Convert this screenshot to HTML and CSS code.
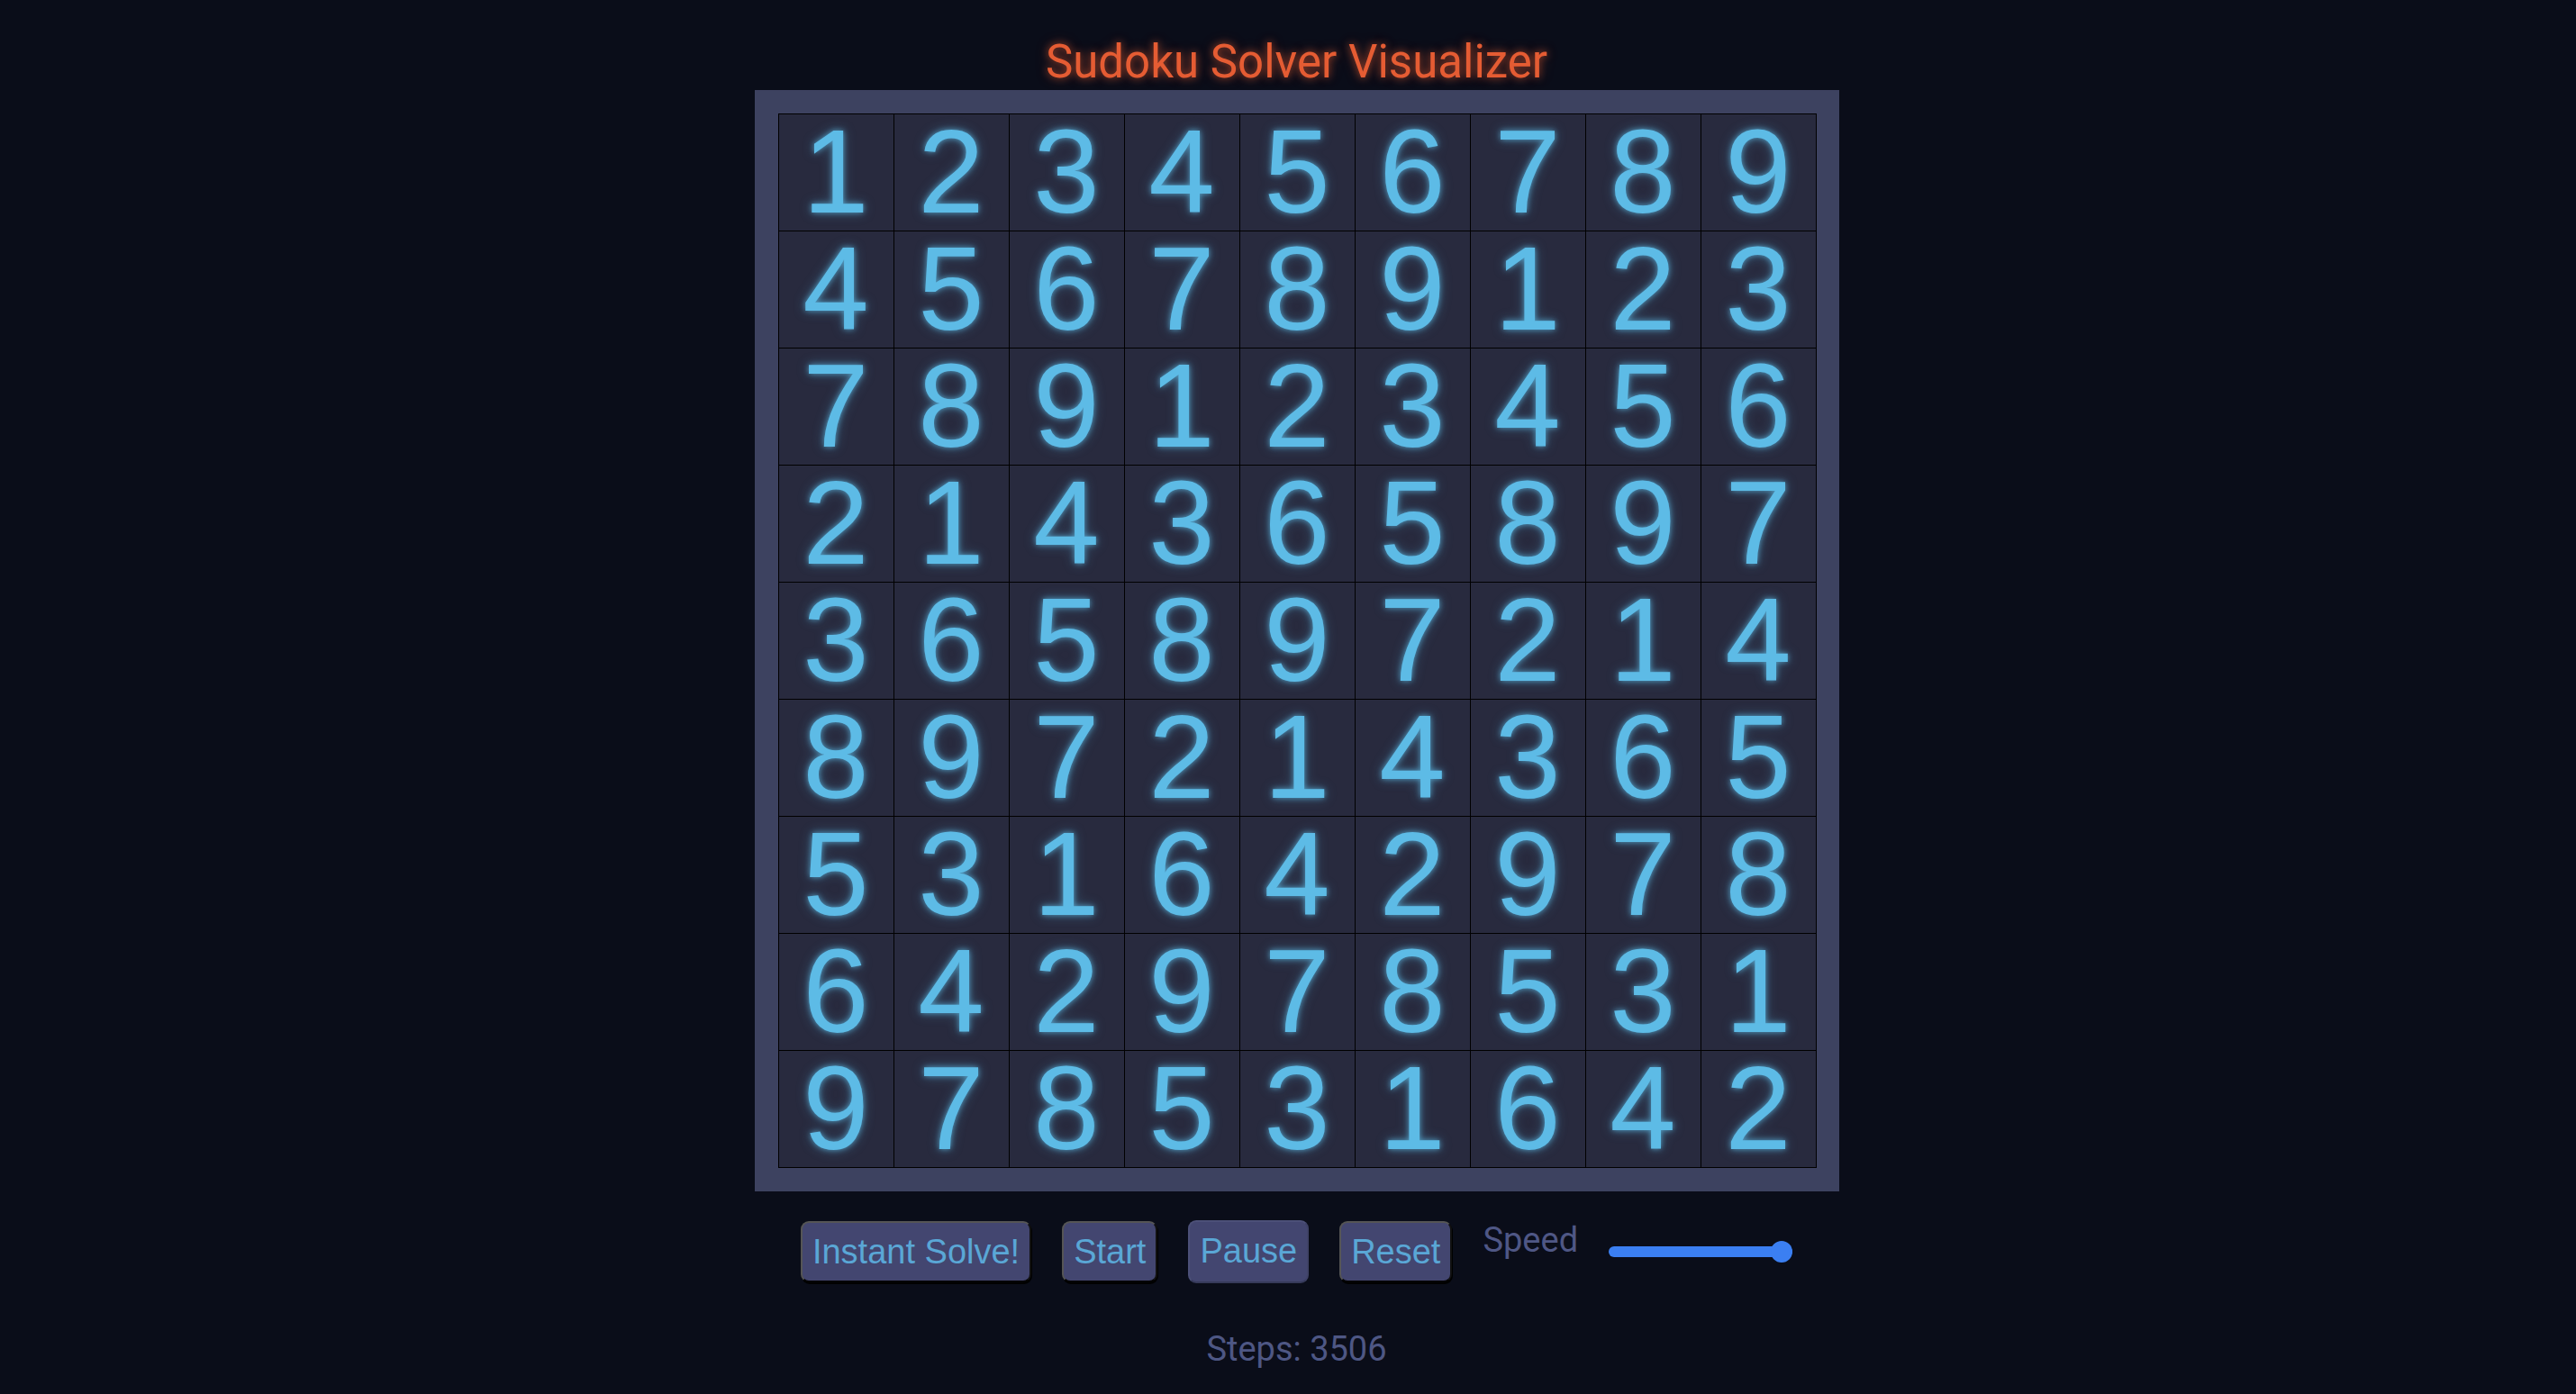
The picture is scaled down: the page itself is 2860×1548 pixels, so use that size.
FILE: index.html
```html
<!DOCTYPE html>
<html>
<head>
<meta charset="utf-8">
<title>Sudoku Solver Visualizer</title>
<link rel="stylesheet" href="styles.css">
</head>
<body>
<main class="app">
  <h1 class="title">Sudoku Solver Visualizer</h1>
  <section class="board">
    <div class="grid">
      <div class="cell">1</div><div class="cell">2</div><div class="cell">3</div><div class="cell">4</div><div class="cell">5</div><div class="cell">6</div><div class="cell">7</div><div class="cell">8</div><div class="cell">9</div>
      <div class="cell">4</div><div class="cell">5</div><div class="cell">6</div><div class="cell">7</div><div class="cell">8</div><div class="cell">9</div><div class="cell">1</div><div class="cell">2</div><div class="cell">3</div>
      <div class="cell">7</div><div class="cell">8</div><div class="cell">9</div><div class="cell">1</div><div class="cell">2</div><div class="cell">3</div><div class="cell">4</div><div class="cell">5</div><div class="cell">6</div>
      <div class="cell">2</div><div class="cell">1</div><div class="cell">4</div><div class="cell">3</div><div class="cell">6</div><div class="cell">5</div><div class="cell">8</div><div class="cell">9</div><div class="cell">7</div>
      <div class="cell">3</div><div class="cell">6</div><div class="cell">5</div><div class="cell">8</div><div class="cell">9</div><div class="cell">7</div><div class="cell">2</div><div class="cell">1</div><div class="cell">4</div>
      <div class="cell">8</div><div class="cell">9</div><div class="cell">7</div><div class="cell">2</div><div class="cell">1</div><div class="cell">4</div><div class="cell">3</div><div class="cell">6</div><div class="cell">5</div>
      <div class="cell">5</div><div class="cell">3</div><div class="cell">1</div><div class="cell">6</div><div class="cell">4</div><div class="cell">2</div><div class="cell">9</div><div class="cell">7</div><div class="cell">8</div>
      <div class="cell">6</div><div class="cell">4</div><div class="cell">2</div><div class="cell">9</div><div class="cell">7</div><div class="cell">8</div><div class="cell">5</div><div class="cell">3</div><div class="cell">1</div>
      <div class="cell">9</div><div class="cell">7</div><div class="cell">8</div><div class="cell">5</div><div class="cell">3</div><div class="cell">1</div><div class="cell">6</div><div class="cell">4</div><div class="cell">2</div>
    </div>
  </section>
  <div class="controls">
    <button class="btn">Instant Solve!</button>
    <button class="btn">Start</button>
    <button class="btn btn-pause">Pause</button>
    <button class="btn">Reset</button>
    <label class="speed-label" for="speed">Speed</label>
    <input class="speed" id="speed" type="range" min="1" max="100" value="100">
  </div>
  <p class="steps">Steps: 3506</p>
</main>
</body>
</html>
```

FILE: styles.css
```css
html, body {
  margin: 0;
  padding: 0;
  background: #0a0d19;
}

body {
  overflow: hidden;
}

.app {
  display: flex;
  flex-direction: column;
  align-items: center;
  padding: 38px 0 0 19px;
}

.title {
  margin: 0;
  font-family: Roboto, "Noto Sans", sans-serif;
  font-weight: 400;
  font-size: 51px;
  line-height: 62px;
  color: #e55c33;
  text-shadow: 0 0 8px rgba(229, 92, 51, 0.65), 0 0 16px rgba(229, 92, 51, 0.3);
}

.board {
  background: #3d4260;
  padding: 26px 25px 26px 26px;
}

.grid {
  display: grid;
  grid-template-columns: repeat(9, 127px);
  grid-auto-rows: 129px;
  gap: 1px;
  padding: 1px;
  background: #000;
}

.cell {
  background: #282a3e;
  font-family: "Liberation Sans", Arial, sans-serif;
  font-size: 132px;
  line-height: 127px;
  text-align: center;
  color: #5dbbe6;
  text-shadow: 0 0 6px rgba(93, 187, 230, 0.75), 0 0 14px rgba(93, 187, 230, 0.35);
}

.controls {
  display: flex;
  align-items: center;
  gap: 34px;
  margin-top: 32px;
}

.btn {
  font-family: "Liberation Sans", Arial, sans-serif;
  font-size: 38px;
  line-height: 44px;
  padding: 10px 11px;
  color: #5aa7d6;
  background: #434670;
  border: 2px solid;
  border-color: #555555 #111111 #050505 #555555;
  border-radius: 9px;
  box-shadow: 1px 2px 0 #000;
}

.btn-pause {
  border-color: #4c5078 #3f4266 #363a5a #4c5078;
  box-shadow: none;
  padding-bottom: 12px;
}

.speed-label {
  align-self: flex-start;
  font-family: Roboto, "Noto Sans", sans-serif;
  font-size: 38px;
  line-height: 45px;
  color: #4f5785;
}

.speed {
  -webkit-appearance: none;
  appearance: none;
  width: 204px;
  height: 12px;
  margin: 0;
  border-radius: 6px;
  background: #3b7ff2;
  outline: none;
}

.speed::-webkit-slider-thumb {
  -webkit-appearance: none;
  appearance: none;
  width: 24px;
  height: 24px;
  border-radius: 50%;
  background: #3b7ff2;
  border: none;
}

.steps {
  margin: 51px 0 0;
  font-family: Roboto, "Noto Sans", sans-serif;
  font-size: 38px;
  line-height: 45px;
  color: #4e5784;
}
```
